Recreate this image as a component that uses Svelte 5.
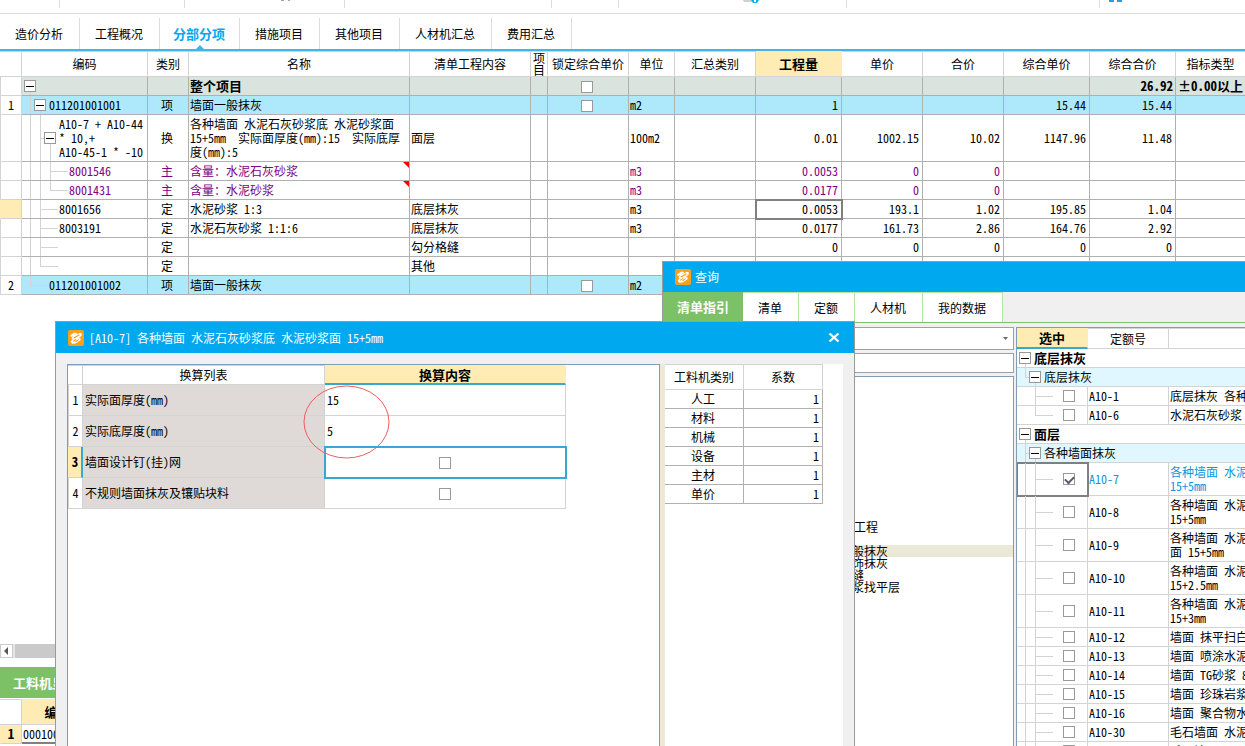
<script lang="ts">
	type Guide = 'v' | 't' | 'l' | '';

	interface Item {
		no?: string;
		code: string;
		guides: Guide[];
		open?: boolean;
		kind: string;
		name: string;
		content?: string;
		lock?: boolean;
		unit?: string;
		// quantity, price, amount, composite price, composite total, index type
		values: string[];
		tone?: string;
		current?: boolean;
		flag?: boolean;
	}

	interface Quota {
		code: string;
		name: string;
		tall?: boolean;
		last?: boolean;
	}

	const mainTabs = ['造价分析', '工程概况', '分部分项', '措施项目', '其他项目', '人材机汇总', '费用汇总'];
	const toolGroups = [60, 125, 160, 207, 67, 228, 253];
	const headers = ['', '编码', '类别', '名称', '清单工程内容', '项目', '锁定综合单价', '单位', '汇总类别', '工程量', '单价', '合价', '综合单价', '综合合价', '指标类型'];
	const columns = [22, 126, 41, 221, 121, 17, 81, 46, 81, 86, 81, 81, 86, 86];

	const items: Item[] = [
		{ code: '', guides: [], open: true, kind: '', name: '整个项目', lock: true, values: ['', '', '', '', '26.92', '±0.00以上'], tone: 'total' },
		{ no: '1', code: '011201001001', guides: ['t'], open: true, kind: '项', name: '墙面一般抹灰', lock: true, unit: 'm2', values: ['1', '', '', '15.44', '15.44', ''], tone: 'bill' },
		{
			code: 'A10-7 + A10-44\n* 10,+\nA10-45-1 * -10',
			guides: ['v', 't'],
			open: true,
			kind: '换',
			name: '各种墙面 水泥石灰砂浆底 水泥砂浆面\n15+5mm  实际面厚度(mm):15  实际底厚\n度(mm):5',
			content: '面层',
			unit: '100m2',
			values: ['0.01', '1002.15', '10.02', '1147.96', '11.48', ''],
			tone: 'tall'
		},
		{ code: '8001546', guides: ['v', 'v', 't'], kind: '主', name: '含量：水泥石灰砂浆', unit: 'm3', values: ['0.0053', '0', '0', '', '', ''], tone: 'material', flag: true },
		{ code: '8001431', guides: ['v', 'v', 'l'], kind: '主', name: '含量：水泥砂浆', unit: 'm3', values: ['0.0177', '0', '0', '', '', ''], tone: 'material', flag: true },
		{ code: '8001656', guides: ['v', 't'], kind: '定', name: '水泥砂浆 1:3', content: '底层抹灰', unit: 'm3', values: ['0.0053', '193.1', '1.02', '195.85', '1.04', ''], current: true },
		{ code: '8003191', guides: ['v', 't'], kind: '定', name: '水泥石灰砂浆 1:1:6', content: '底层抹灰', unit: 'm3', values: ['0.0177', '161.73', '2.86', '164.76', '2.92', ''] },
		{ code: '', guides: ['v', 't'], kind: '定', name: '', content: '勾分格缝', values: ['0', '0', '0', '0', '0', ''] },
		{ code: '', guides: ['v', 'l'], kind: '定', name: '', content: '其他', values: ['0', '0', '0', '0', '0', ''] },
		{ no: '2', code: '011201001002', guides: ['l'], kind: '项', name: '墙面一般抹灰', lock: true, unit: 'm2', values: ['', '', '', '', '', ''], tone: 'bill' }
	];

	const queryTabs = ['清单指引', '清单', '定额', '人材机', '我的数据'];
	const chapters = [
		{ name: '墙、柱面装饰与隔断、幕墙工程', depth: 'chapter' },
		{ name: '墙面抹灰', depth: 'section' },
		{ name: '墙面一般抹灰', depth: 'entry', active: true },
		{ name: '墙面装饰抹灰', depth: 'entry' },
		{ name: '墙面勾缝', depth: 'entry' },
		{ name: '立面砂浆找平层', depth: 'entry' }
	];

	const quotaGroups: { title: string; sub: string; end: boolean; rows: Quota[] }[] = [
		{
			title: '底层抹灰',
			sub: '底层抹灰',
			end: true,
			rows: [
				{ code: 'A10-1', name: '底层抹灰 各种墙面' },
				{ code: 'A10-6', name: '水泥石灰砂浆 底', last: true }
			]
		},
		{
			title: '面层',
			sub: '各种墙面抹灰',
			end: false,
			rows: [
				{ code: 'A10-7', name: '各种墙面 水泥石灰砂浆底\n15+5mm', tall: true },
				{ code: 'A10-8', name: '各种墙面 水泥砂浆底\n15+5mm', tall: true },
				{ code: 'A10-9', name: '各种墙面 水泥石灰砂浆底\n面 15+5mm', tall: true },
				{ code: 'A10-10', name: '各种墙面 水泥砂浆底\n15+2.5mm', tall: true },
				{ code: 'A10-11', name: '各种墙面 水泥砂浆底\n15+3mm', tall: true },
				{ code: 'A10-12', name: '墙面 抹平扫白' },
				{ code: 'A10-13', name: '墙面 喷涂水泥' },
				{ code: 'A10-14', name: '墙面 TG砂浆 8mm' },
				{ code: 'A10-15', name: '墙面 珍珠岩浆' },
				{ code: 'A10-16', name: '墙面 聚合物水泥' },
				{ code: 'A10-30', name: '毛石墙面 水泥砂浆' },
				{ code: 'A10-31', name: '毛石墙面' }
			]
		}
	];

	const options = [
		{ name: '实际面厚度(mm)', value: '15' },
		{ name: '实际底厚度(mm)', value: '5' },
		{ name: '墙面设计钉(挂)网' },
		{ name: '不规则墙面抹灰及镶贴块料' }
	];
	const factors = ['人工', '材料', '机械', '设备', '主材', '单价'];
</script>

{#snippet tree(guides: Guide[], open: boolean, hasChildren: boolean)}
	{#each guides as guide, i}
		<span class="guide {guide}" class:leaf={!open && i === guides.length - 1}></span>
	{/each}
	<span class="node" class:children={hasChildren}>
		{#if open}
			<button class="toggle" aria-label="折叠"></button>
		{/if}
	</span>
{/snippet}

{#snippet logo()}
	<svg class="logo" viewBox="0 0 16 16" aria-hidden="true">
		<rect width="16" height="16" rx="2" fill="#f9a01b" />
		<path d="M2 5.2 6.5 2.4 9 3 8.4 4.8 12 2.8 14 3.6 13.4 6 10.8 8 12.8 8.4 12.4 10.6 7.6 13.6 4 13.8 2.8 11.4 4.6 9 3.4 8.4 5 6.2 3 7Z" fill="#fff" />
		<path d="M5.6 8.2 11.4 4.8M5 11.4 8.2 9.4M7.4 11.8 10.8 9.6" stroke="#f9a01b" stroke-width="1.1" fill="none" />
	</svg>
{/snippet}

<div class="app">
	<div class="toolbar">
		{#each toolGroups as width, i}
			<span class="tool-group" style:width="{width}px">
				{#if i === 2}
					<svg class="tool brush" viewBox="0 0 12 2"><path d="M1 0h3v1H1zM8 0h2v1H8z" fill="#aaa68f" /></svg>
				{:else if i === 5}
					<svg class="tool info" viewBox="0 0 16 3"><path d="M0 0h9v2H1z" fill="#d0d0d0" /><path d="M8 0h8l-2 3h-4z" fill="#06aeef" /><path d="M11 0h2v2h-2z" fill="#fff" /></svg>
				{/if}
			</span>
		{/each}
		<svg class="tool blocks" viewBox="0 0 14 2"><path d="M0 0h5v2H0zM8 0h5v2H8z" fill="#2f9bd6" /></svg>
	</div>

	<nav class="tabs">
		{#each mainTabs as tab, i}
			<button class="tab" class:active={i === 2}>{tab}</button>
		{/each}
	</nav>

	<main class="sheet">
		<table class="grid">
			<colgroup>
				{#each columns as width}
					<col style:width="{width}px" />
				{/each}
				<col />
			</colgroup>
			<thead>
				<tr>
					{#each headers as header}
						<th class:picked={header === '工程量'} class:narrow={header === '项目'}>{header}</th>
					{/each}
				</tr>
			</thead>
			<tbody>
				{#each items as item}
					<tr class={item.tone}>
						<td class="row-no" class:picked={item.current}>{item.no ?? ''}</td>
						<td class="tree-cell">
							<div class="tree">
								{@render tree(item.guides, !!item.open, !!item.open)}
								<span class="code">{item.code}</span>
							</div>
						</td>
						<td class="center">{item.kind}</td>
						<td class="name" class:flag={item.flag}>{item.name}</td>
						<td>{item.content ?? ''}</td>
						<td></td>
						<td class="center lock">
							{#if item.lock}<input type="checkbox" aria-label="锁定综合单价" />{/if}
						</td>
						<td>{item.unit ?? ''}</td>
						<td></td>
						{#each item.values as value, i}
							<td class="num" class:cursor={item.current && i === 0}>{value}</td>
						{/each}
					</tr>
				{/each}
			</tbody>
		</table>
	</main>

	<div class="scrollbar">
		<button class="scroll-left" aria-label="向左滚动"></button>
		<span class="thumb"></span>
	</div>

	<section class="detail">
		<div class="detail-tabs"><button class="green-tab">工料机显示</button></div>
		<table class="grid detail-grid">
			<colgroup><col style:width="22px" /><col style:width="72px" /><col /></colgroup>
			<thead>
				<tr><th></th><th class="picked">编码</th><th></th></tr>
			</thead>
			<tbody>
				<tr><td class="row-no picked">1</td><td>00010010</td><td></td></tr>
			</tbody>
		</table>
	</section>

	<section class="window query" aria-label="查询">
		<header class="title">{@render logo()}<span>查询</span></header>
		<nav class="query-tabs">
			{#each queryTabs as tab, i}
				<button class="query-tab" class:active={i === 0}>{tab}</button>
			{/each}
		</nav>
		<div class="query-body">
			<div class="browse">
				<div class="combo">
					<select aria-label="清单库"><option></option></select>
					<svg viewBox="0 0 5 3" aria-hidden="true"><path d="M0 0h5L2.5 3z" fill="#666a75" /></svg>
				</div>
				<input class="search" type="text" aria-label="搜索" />
				<ul class="chapters">
					{#each chapters as chapter}
						<li class={chapter.depth} class:active={chapter.active}>{chapter.name}</li>
					{/each}
				</ul>
			</div>
			<div class="quota">
				<table class="grid light">
					<colgroup><col style:width="71px" /><col style:width="81px" /><col /></colgroup>
					<thead>
						<tr><th class="picked underlined">选中</th><th>定额号</th><th></th></tr>
					</thead>
					<tbody>
						{#each quotaGroups as group}
							<tr class="group">
								<td class="tree-cell" colspan="3">
									<div class="tree">{@render tree([], true, true)}<span class="code">{group.title}</span></div>
								</td>
							</tr>
							<tr class="subgroup">
								<td class="tree-cell" colspan="3">
									<div class="tree">{@render tree([group.end ? 'l' : 't'], true, true)}<span class="code">{group.sub}</span></div>
								</td>
							</tr>
							{#each group.rows as row}
								<tr class:two-line={row.tall} class:chosen={row.code === 'A10-7'}>
									<td class="tree-cell" class:cursor={row.code === 'A10-7'}>
										<div class="tree">
											{@render tree([group.end ? '' : 'v', row.last ? 'l' : 't'], false, false)}
											<input type="checkbox" aria-label={row.code} checked={row.code === 'A10-7'} />
										</div>
									</td>
									<td>{row.code}</td>
									<td>{row.name}</td>
								</tr>
							{/each}
						{/each}
					</tbody>
				</table>
			</div>
		</div>
	</section>

	<section class="window convert" aria-label="换算">
		<header class="title">
			{@render logo()}<span>[A10-7] 各种墙面 水泥石灰砂浆底 水泥砂浆面 15+5mm</span>
			<button class="close" aria-label="关闭">
				<svg viewBox="0 0 12 9" aria-hidden="true"><path d="M1.5.5 10.5 8.5M10.5.5 1.5 8.5" stroke="#fff" stroke-width="2.2" /></svg>
			</button>
		</header>
		<div class="convert-body">
			<div class="options">
				<table class="grid light option-grid">
					<colgroup><col style:width="15px" /><col style:width="242px" /><col style:width="241px" /></colgroup>
					<thead>
						<tr><th></th><th>换算列表</th><th class="picked underlined">换算内容</th></tr>
					</thead>
					<tbody>
						{#each options as option, i}
							<tr>
								<td class="row-no" class:picked={i === 2}>{i + 1}</td>
								<td class="option-name">{option.name}</td>
								<td class="option-value" class:center={!option.value} class:focus={i === 2}>
									{#if option.value}{option.value}{:else}<input type="checkbox" aria-label={option.name} />{/if}
								</td>
							</tr>
						{/each}
					</tbody>
				</table>
			</div>
			<div class="factors">
				<table class="grid factor-grid">
					<colgroup><col style:width="79px" /><col style:width="79px" /></colgroup>
					<thead>
						<tr><th>工料机类别</th><th>系数</th></tr>
					</thead>
					<tbody>
						{#each factors as factor}
							<tr><td class="center">{factor}</td><td class="num">1</td></tr>
						{/each}
					</tbody>
				</table>
			</div>
		</div>
		<svg class="mark" viewBox="0 0 87 74" aria-hidden="true">
			<ellipse cx="43.5" cy="37" rx="42.5" ry="36" fill="none" stroke="#f25c5c" stroke-width="1" />
		</svg>
	</section>
</div>

<style>
	:global(body) {
		margin: 0;
		overflow: hidden;
	}

	.app {
		--blue: #00a8f0;
		--green: #7dc167;
		--yellow: #ffecb5;
		--line: #d3d3d3;
		--line-dark: #b0b0b0;
		position: relative;
		display: flex;
		flex-direction: column;
		height: 100vh;
		overflow: hidden;
		background: #fff;
		color: #000;
		font-family: SimSun, 'Noto Sans Mono CJK SC', 'Noto Sans CJK SC', monospace;
		font-size: 12px;
		line-height: 14px;
	}

	.app :global(*) {
		box-sizing: border-box;
	}

	button,
	input,
	select {
		font: inherit;
		color: inherit;
		margin: 0;
		padding: 0;
		border: 0;
		border-radius: 0;
		background: none;
	}

	.toolbar {
		display: flex;
		flex: none;
		height: 14px;
		border-bottom: 1px solid #dcdcdc;
	}

	.tool-group {
		display: flex;
		justify-content: flex-end;
		height: 8px;
		border-right: 1px solid #dcdcdc;
	}

	.tool {
		display: block;
		height: 3px;
	}

	.brush {
		width: 12px;
		height: 2px;
		margin-right: 52px;
	}

	.info {
		width: 16px;
		margin-right: 87px;
	}

	.blocks {
		width: 14px;
		height: 2px;
		margin-left: 9px;
	}

	.tabs {
		display: flex;
		flex: none;
		height: 37px;
		padding-top: 4px;
		border-bottom: 2px solid #41b6e6;
	}

	.tab {
		position: relative;
		padding: 0 16px 0 15px;
		border-right: 1px solid #dcdcdc;
	}

	.tab.active {
		padding: 0 14px 0 13px;
		font-size: 13px;
		font-weight: bold;
		color: var(--blue);
	}

	.tab.active::after {
		content: '';
		position: absolute;
		left: 50%;
		bottom: 0;
		margin-left: -4px;
		border: 4px solid transparent;
		border-top: 0;
		border-bottom-color: #41b6e6;
	}

	.sheet {
		flex: 1;
		min-height: 0;
		overflow: hidden;
	}

	.grid {
		width: 100%;
		table-layout: fixed;
		border-collapse: separate;
		border-spacing: 0;
	}

	th,
	td {
		height: 19px;
		padding: 0 2px 0 1px;
		border: 0 solid var(--line-dark);
		border-width: 0 1px 1px 0;
		text-align: left;
		white-space: pre;
		overflow: hidden;
	}

	th {
		height: 26px;
		padding: 0;
		border-color: var(--line);
		border-top-width: 1px;
		font-weight: normal;
		text-align: center;
	}

	.sheet tr > :last-child,
	.quota tr > :last-child {
		border-right: 0;
	}

	.narrow {
		white-space: normal;
		line-height: 12px;
	}

	.light td {
		border-color: var(--line);
	}

	.picked,
	td.picked {
		background: var(--yellow);
		font-size: 13px;
		font-weight: bold;
	}

	th.picked {
		border-color: var(--yellow);
		border-bottom-color: var(--line);
	}

	th.underlined {
		border-bottom: 2px solid #38a7d4;
	}

	td.row-no {
		padding: 0;
		border-color: var(--line);
		border-left-width: 1px;
		text-align: center;
	}

	td.row-no.picked {
		border-left-color: var(--yellow);
	}

	td.center {
		padding: 0 2px 0 0;
		text-align: center;
	}

	td.num {
		padding-right: 3px;
		text-align: right;
	}

	.total td:not(.row-no) {
		background: #dae4de;
		font-size: 13px;
		font-weight: bold;
	}

	.total td.num {
		padding-right: 2px;
	}

	.bill td:not(.row-no) {
		background: #ade9fb;
	}

	.material {
		color: #800080;
	}

	.material .row-no {
		color: #000;
	}

	.tall td {
		height: 47px;
	}

	td.cursor {
		position: relative;
		outline: 2px solid #808080;
		outline-offset: -1px;
	}

	.flag {
		position: relative;
	}

	.flag::after {
		content: '';
		position: absolute;
		top: 0;
		right: 0;
		border: 3px solid transparent;
		border-top-color: #f00;
		border-right-color: #f00;
	}

	input[type='checkbox'] {
		appearance: none;
		display: inline-block;
		flex: none;
		width: 12px;
		height: 12px;
		border: 1px solid #999;
		background: #fff;
		vertical-align: middle;
	}

	input[type='checkbox']:checked::after {
		content: '';
		display: block;
		width: 7px;
		height: 4px;
		margin: 2px 1px;
		border: solid #555a66;
		border-width: 0 0 2px 2px;
		transform: rotate(-45deg);
	}

	td.tree-cell {
		padding: 0 0 0 2px;
	}

	.tree {
		display: flex;
		align-items: center;
		height: 18px;
	}

	.tall .tree {
		height: 46px;
	}

	.guide,
	.node {
		position: relative;
		flex: none;
		align-self: stretch;
		width: 10px;
	}

	.node {
		display: flex;
		align-items: center;
		width: 15px;
	}

	.guide.v::before,
	.guide.t::before,
	.guide.l::before,
	.node.children::before {
		content: '';
		position: absolute;
		left: 6px;
		top: 0;
		bottom: 0;
		border-left: 1px solid var(--line);
	}

	.guide.l::before {
		bottom: 50%;
	}

	.guide.t::after,
	.guide.l::after {
		content: '';
		position: absolute;
		left: 6px;
		top: 50%;
		width: 4px;
		border-top: 1px solid var(--line);
	}

	.guide.leaf::after {
		width: 18px;
	}

	.node.children::before {
		top: 50%;
	}

	.toggle {
		position: relative;
		width: 12px;
		height: 12px;
		border: 1px solid #999;
		background: linear-gradient(#000, #000) center / 8px 1px no-repeat #fff;
	}

	.scrollbar {
		display: flex;
		flex: none;
		height: 14px;
		margin-bottom: 9px;
		background: #e4e4e4;
		gap: 2px;
	}

	.scroll-left {
		width: 13px;
		border: 1px solid #ccc;
		background: #fff;
	}

	.scroll-left::after {
		content: '';
		display: block;
		width: 0;
		margin: auto 3px;
		border: 4px solid transparent;
		border-left: 0;
		border-right-color: #555;
	}

	.thumb {
		flex: 1;
		background: #cacaca;
	}

	.detail {
		flex: none;
		height: 79px;
		overflow: hidden;
	}

	.detail-tabs {
		display: flex;
		height: 31px;
		margin-bottom: 1px;
		background: var(--green);
	}

	.green-tab {
		padding: 0 13px;
		font-size: 13px;
		font-weight: bold;
		color: #fff;
	}

	.detail-grid td:not(.row-no) {
		border-bottom: 2px solid #808080;
	}

	.window {
		position: absolute;
		bottom: 0;
		display: flex;
		flex-direction: column;
		border: 1px solid #9a9a9a;
		border-bottom: 0;
		background: #f0f0f0;
	}

	.title {
		display: flex;
		align-items: center;
		flex: none;
		gap: 5px;
		height: 31px;
		padding: 0 12px;
		background: var(--blue);
		color: #fff;
		white-space: pre;
	}

	.logo {
		width: 16px;
		height: 16px;
	}

	.query {
		top: 261px;
		left: 662px;
		right: 0;
		border-right: 0;
	}

	.query .title {
		height: 30px;
		gap: 4px;
	}

	.query-tabs {
		display: flex;
		flex: none;
		height: 31px;
		border-bottom: 1px solid var(--green);
	}

	.query-tab {
		padding: 0 16px 0 15px;
		border: 0 solid #b5e3a2;
		border-width: 1px 1px 0 0;
		background: #fff;
	}

	.query-tab.active {
		padding: 0 14px;
		border: 0;
		background: var(--green);
		color: #fff;
		font-size: 13px;
		font-weight: bold;
	}

	.query-body {
		display: flex;
		flex: 1;
		min-height: 0;
		gap: 2px;
		padding: 4px 0 0 8px;
	}

	.browse {
		display: flex;
		flex-direction: column;
		width: 343px;
		flex: none;
	}

	.combo {
		position: relative;
		height: 23px;
		margin-bottom: 3px;
		border: 1px solid #a0a0a0;
		background: #fff;
	}

	.combo select {
		appearance: none;
		width: 100%;
		height: 100%;
	}

	.combo svg {
		position: absolute;
		right: 5px;
		top: 9px;
		width: 5px;
		height: 3px;
	}

	.search {
		flex: none;
		height: 20px;
		margin-bottom: 3px;
		border: 1px solid #a0a0a0;
		background: #fff;
	}

	.chapters {
		flex: 1;
		margin: 0;
		padding: 144px 0 0;
		border: 1px solid #7f9db9;
		border-bottom: 0;
		background: #fff;
		list-style: none;
		line-height: 12px;
		white-space: nowrap;
	}

	.chapter {
		padding-left: 38px;
	}

	.section {
		padding-left: 91px;
	}

	.entry {
		padding-left: 144px;
	}

	.chapters .active {
		background: #ebe8d8;
	}

	.quota {
		flex: 1;
		min-width: 0;
		overflow: hidden;
		border: 1px solid #7f9db9;
		border-width: 1px 0 0 1px;
		background: #fff;
	}

	.quota th {
		height: 21px;
	}

	.group {
		font-size: 13px;
		font-weight: bold;
	}

	.subgroup td {
		background: #e1f7ff;
	}

	.two-line td {
		height: 33px;
	}

	.two-line .tree {
		height: 32px;
	}

	.quota input {
		margin-left: 9px;
	}

	.chosen {
		color: #0a96e0;
	}

	.convert {
		top: 321px;
		left: 55px;
		width: 800px;
	}

	.close {
		width: 12px;
		height: 16px;
		margin-left: auto;
		margin-right: 2px;
	}

	.close svg {
		display: block;
		width: 12px;
		height: 9px;
	}

	.convert-body {
		display: flex;
		flex: 1;
		min-height: 0;
		padding: 11px 11px 0;
	}

	.options {
		flex: 1;
		border: 1px solid #7f9db9;
		border-bottom: 0;
		background: #fff;
	}

	.option-grid {
		width: 498px;
	}

	.option-grid th {
		height: 20px;
	}

	.option-grid td {
		height: 31px;
	}

	.option-grid .row-no.picked {
		border-right: 2px solid #38a7d4;
	}

	td.option-name {
		padding-left: 2px;
		background: #dfdad8;
	}

	td.option-value {
		padding-left: 2px;
	}

	td.focus {
		position: relative;
		outline: 2px solid #38a7d4;
		outline-offset: -1px;
	}

	.factors {
		width: 183px;
		border-left: 5px solid #ece9d8;
		background: #fff;
	}

	.factor-grid {
		width: 158px;
	}

	.mark {
		position: absolute;
		left: 247px;
		top: 63px;
		width: 87px;
		height: 74px;
	}
</style>
